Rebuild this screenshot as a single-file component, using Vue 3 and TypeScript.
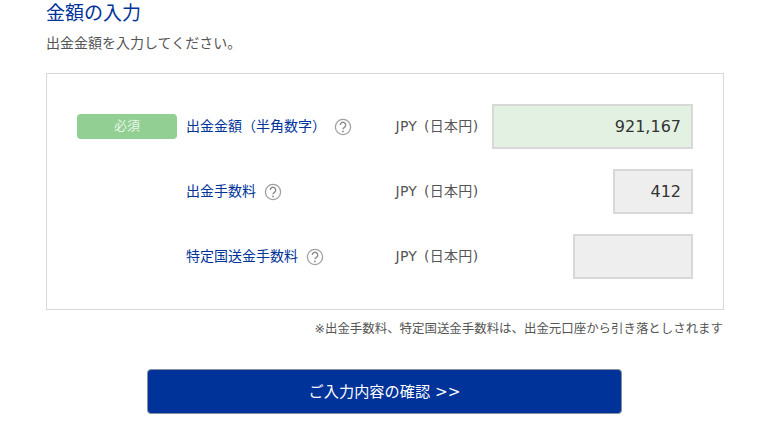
<script setup lang="ts">
interface Row {
  label: string
  required: boolean
  value: string
  size: string
}
const rows: Row[] = [
  { label: '出金金額（半角数字）', required: true, value: '921,167', size: 'large' },
  { label: '出金手数料', required: false, value: '412', size: 'small' },
  { label: '特定国送金手数料', required: false, value: '', size: 'medium' },
]
</script>

<template>
  <main class="page">
    <h2 class="title">金額の入力</h2>
    <p class="lead">出金金額を入力してください。</p>
    <section class="panel">
      <div v-for="row in rows" :key="row.label" class="row">
        <div class="badge-slot">
          <span v-if="row.required" class="badge">必須</span>
        </div>
        <div class="label">
          <span class="label-text">{{ row.label }}</span>
          <svg class="help" viewBox="0 0 18 18" width="18" height="18" aria-hidden="true">
            <circle cx="9" cy="9" r="7.6" fill="none" stroke="#a0a0a0" stroke-width="1.3" />
            <path d="M6.3 7a2.7 2.7 0 1 1 4.1 2.3c-.9.6-1.4 1-1.4 2" fill="none" stroke="#8c8c8c" stroke-width="1.4" />
            <circle cx="9" cy="13.4" r=".9" fill="#8c8c8c" />
          </svg>
        </div>
        <div class="unit">JPY (日本円)</div>
        <div class="field" :class="row.size">{{ row.value }}</div>
      </div>
    </section>
    <p class="note">※出金手数料、特定国送金手数料は、出金元口座から引き落としされます</p>
    <div class="actions">
      <button class="confirm" type="button">ご入力内容の確認 &gt;&gt;</button>
    </div>
  </main>
</template>

<style>
html, body { margin: 0; background: #fff; }
</style>

<style scoped>
.page {
  width: 678px;
  height: 430px;
  margin-left: 46px;
  overflow: hidden;
  font-family: "DejaVu Sans", "Noto Sans CJK JP", sans-serif;
  color: #444;
}
.title {
  margin: 0;
  padding-top: 1px;
  font-size: 19px;
  font-weight: 400;
  line-height: 24px;
  color: #003399;
}
.lead {
  margin: 8px 0 0;
  font-size: 14px;
  line-height: 20px;
  color: #555;
}
.panel {
  box-sizing: border-box;
  margin-top: 20px;
  height: 237px;
  padding: 30px;
  border: 1px solid #d8d8d8;
  display: flex;
  flex-direction: column;
  gap: 20px;
}
.row {
  display: flex;
  align-items: center;
  height: 45px;
}
.badge-slot {
  width: 100px;
  margin-right: 9px;
  flex: none;
}
.badge {
  display: block;
  height: 25px;
  line-height: 24px;
  text-align: center;
  font-size: 13px;
  color: #e8f5e8;
  background: #92cf92;
  border-radius: 4px;
}
.label {
  width: 209px;
  flex: none;
  display: flex;
  align-items: center;
  gap: 8px;
  font-size: 14px;
  color: #003399;
}
.label-text { padding-bottom: 3px; }
.help { flex: none; }
.unit {
  flex: 1;
  padding: 0 0 3px 0.5px;
  font-size: 14px;
  word-spacing: 2px;
  letter-spacing: 0.3px;
  color: #555;
}
.field {
  box-sizing: border-box;
  height: 45px;
  line-height: 41px;
  padding: 0 10px;
  text-align: right;
  font-size: 16px;
  color: #333;
  border: 2px solid #d8d8d8;
  background: #eee;
}
.field.large { width: 201px; background: #e3f1e3; }
.field.small { width: 80px; }
.field.medium { width: 120px; }
.note {
  margin: 9px 1px 0 0;
  text-align: right;
  font-size: 12.45px;
  line-height: 20px;
  color: #555;
}
.actions {
  margin: 30px 0 0 101px;
}
.confirm {
  display: block;
  box-sizing: border-box;
  width: 475px;
  height: 45px;
  padding: 0 0 4px;
  border: 1px solid #8a8fa0;
  border-radius: 4px;
  background: #003399;
  color: #fff;
  font-family: "DejaVu Sans", "Noto Sans CJK JP", sans-serif;
  font-size: 15.2px;
}
</style>
